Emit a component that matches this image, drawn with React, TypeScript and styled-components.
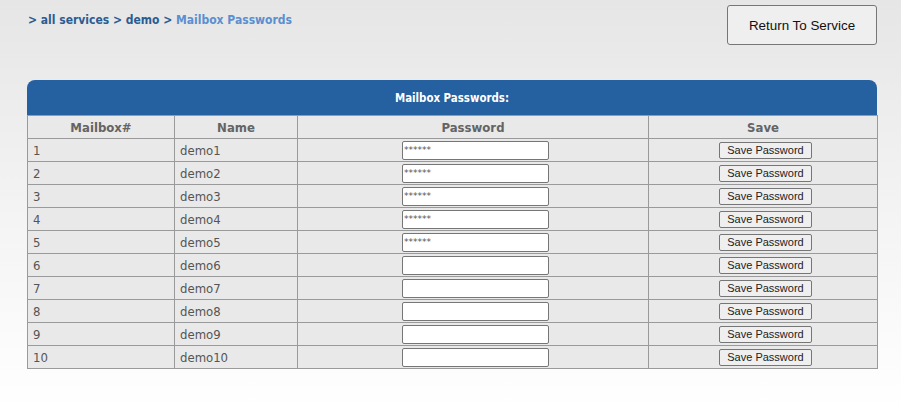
import React from "react";
import styled, { createGlobalStyle } from "styled-components";

const Global = createGlobalStyle`
  html, body { margin: 0; padding: 0; }
  body {
    width: 901px;
    height: 411px;
    overflow: hidden;
    background: linear-gradient(to bottom, #e6e6e6 0%, #f2f2f2 45%, #ffffff 100%);
    font-family: "DejaVu Sans Condensed", "DejaVu Sans", sans-serif;
  }
`;

const Page = styled.div`
  padding: 0 24px 0 27px;
  width: 850px;
`;

const TopBar = styled.div`
  display: flex;
  justify-content: space-between;
  align-items: flex-start;
  height: 80px;
`;

const Crumbs = styled.div`
  padding-top: 13px;
  padding-left: 1px;
  font-size: 12px;
  font-weight: bold;
  color: #2b5c91;
`;

const CrumbCurrent = styled.span`
  color: #5a8fd1;
`;

const ReturnButton = styled.button`
  margin-top: 5px;
  width: 150px;
  height: 40px;
  background: #efefef;
  border: 1px solid #767676;
  border-radius: 3px;
  font-family: "Liberation Sans", Arial, sans-serif;
  font-size: 13.4px;
  color: #111;
`;

const Panel = styled.div`
  width: 850px;
`;

const PanelHead = styled.div`
  height: 35px;
  background: #2560a0;
  border-radius: 8px 8px 0 0;
  color: #fff;
  font-size: 11.4px;
  font-weight: bold;
  display: flex;
  align-items: center;
  justify-content: center;
`;

const Table = styled.table`
  width: 850px;
  border-collapse: collapse;
  table-layout: fixed;
  background: #e9e9e9;
`;

const Th = styled.th`
  border: 1px solid #9a9a9a;
  height: 22px;
  padding: 0;
  font-size: 13px;
  font-weight: bold;
  color: #646464;
  text-align: center;
`;

const Td = styled.td<{ $center?: boolean }>`
  border: 1px solid #9a9a9a;
  height: 22px;
  padding: 0 0 0 5px;
  font-size: 13px;
  color: #555;
  text-align: ${(p) => (p.$center ? "center" : "left")};
  vertical-align: middle;
`;

const PwInput = styled.input`
  box-sizing: border-box;
  width: 147px;
  height: 19px;
  margin: 0;
  padding: 0 1px;
  border: 1px solid #767676;
  border-radius: 2px;
  background: #fff;
  font-family: "DejaVu Sans", sans-serif;
  font-size: 9px;
  color: #555;
  vertical-align: middle;
  &:focus { outline: none; }
`;

const SaveButton = styled.button`
  box-sizing: border-box;
  width: 93px;
  height: 17px;
  margin: 0;
  padding: 0;
  background: #efefef;
  border: 1px solid #767676;
  border-radius: 2px;
  font-family: "Liberation Sans", Arial, sans-serif;
  font-size: 11px;
  color: #222;
  vertical-align: middle;
  line-height: 15px;
`;

const rows = Array.from({ length: 10 }, (_, i) => ({
  n: i + 1,
  name: `demo${i + 1}`,
  pw: i < 5 ? "******" : "",
}));

export default function App() {
  return (
    <>
      <Global />
      <Page>
        <TopBar>
          <Crumbs>
            &gt; all services &gt; demo &gt; <CrumbCurrent>Mailbox Passwords</CrumbCurrent>
          </Crumbs>
          <ReturnButton>Return To Service</ReturnButton>
        </TopBar>
        <Panel>
          <PanelHead>Mailbox Passwords:</PanelHead>
          <Table>
            <colgroup>
              <col style={{ width: 147 }} />
              <col style={{ width: 123 }} />
              <col style={{ width: 351 }} />
              <col style={{ width: 229 }} />
            </colgroup>
            <thead>
              <tr>
                <Th>Mailbox#</Th>
                <Th>Name</Th>
                <Th>Password</Th>
                <Th>Save</Th>
              </tr>
            </thead>
            <tbody>
              {rows.map((r) => (
                <tr key={r.n}>
                  <Td>{r.n}</Td>
                  <Td>{r.name}</Td>
                  <Td $center>
                    <PwInput type="text" defaultValue={r.pw} />
                  </Td>
                  <Td $center>
                    <SaveButton>Save Password</SaveButton>
                  </Td>
                </tr>
              ))}
            </tbody>
          </Table>
        </Panel>
      </Page>
    </>
  );
}
